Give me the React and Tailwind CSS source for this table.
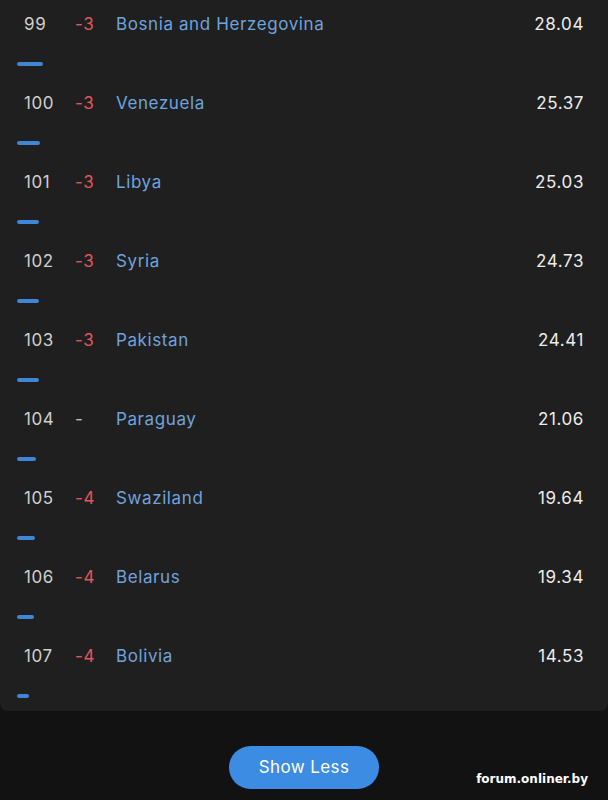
const rows = [
  { rank: 99, change: "-3", name: "Bosnia and Herzegovina", score: "28.04", bar: 26 },
  { rank: 100, change: "-3", name: "Venezuela", score: "25.37", bar: 23 },
  { rank: 101, change: "-3", name: "Libya", score: "25.03", bar: 22 },
  { rank: 102, change: "-3", name: "Syria", score: "24.73", bar: 22 },
  { rank: 103, change: "-3", name: "Pakistan", score: "24.41", bar: 22 },
  { rank: 104, change: "-", name: "Paraguay", score: "21.06", bar: 19 },
  { rank: 105, change: "-4", name: "Swaziland", score: "19.64", bar: 18 },
  { rank: 106, change: "-4", name: "Belarus", score: "19.34", bar: 17 },
  { rank: 107, change: "-4", name: "Bolivia", score: "14.53", bar: 12 },
];

function App() {
  return (
    <div className="relative min-h-[800px] bg-[#121212] font-['Inter',sans-serif]">
      <div className="bg-[#1f1f1f] rounded-b-lg">
        {rows.map((r) => (
          <div key={r.rank} className="h-[79px] pt-3">
            <div className="flex items-center h-6 text-[17px] leading-6 tracking-[0.6px]">
              <span className="w-[75px] shrink-0 pl-6 text-[#cfcfcf]">{r.rank}</span>
              <span className={"w-[41px] shrink-0 " + (r.change === "-" ? "text-[#bdbdbd]" : "text-[#e0575a]")}>{r.change}</span>
              <span className="flex-1 text-[#6fa3dd]">{r.name}</span>
              <span className="pr-6 text-[#ececec]">{r.score}</span>
            </div>
            <div className="mt-[26px] ml-[17px] h-1 rounded-full bg-[#3f86d6]" style={{ width: r.bar }} />
          </div>
        ))}
      </div>
      <div className="flex justify-center pt-[35px]">
        <button className="w-[150px] h-[43px] rounded-full bg-[#3d8ce3] text-white text-[17px] tracking-[0.4px]">Show Less</button>
      </div>
      <div className="absolute right-5 top-[770px] text-[12px] font-bold text-white font-['DejaVu_Sans',sans-serif]">forum.onliner.by</div>
    </div>
  );
}

export default App;
